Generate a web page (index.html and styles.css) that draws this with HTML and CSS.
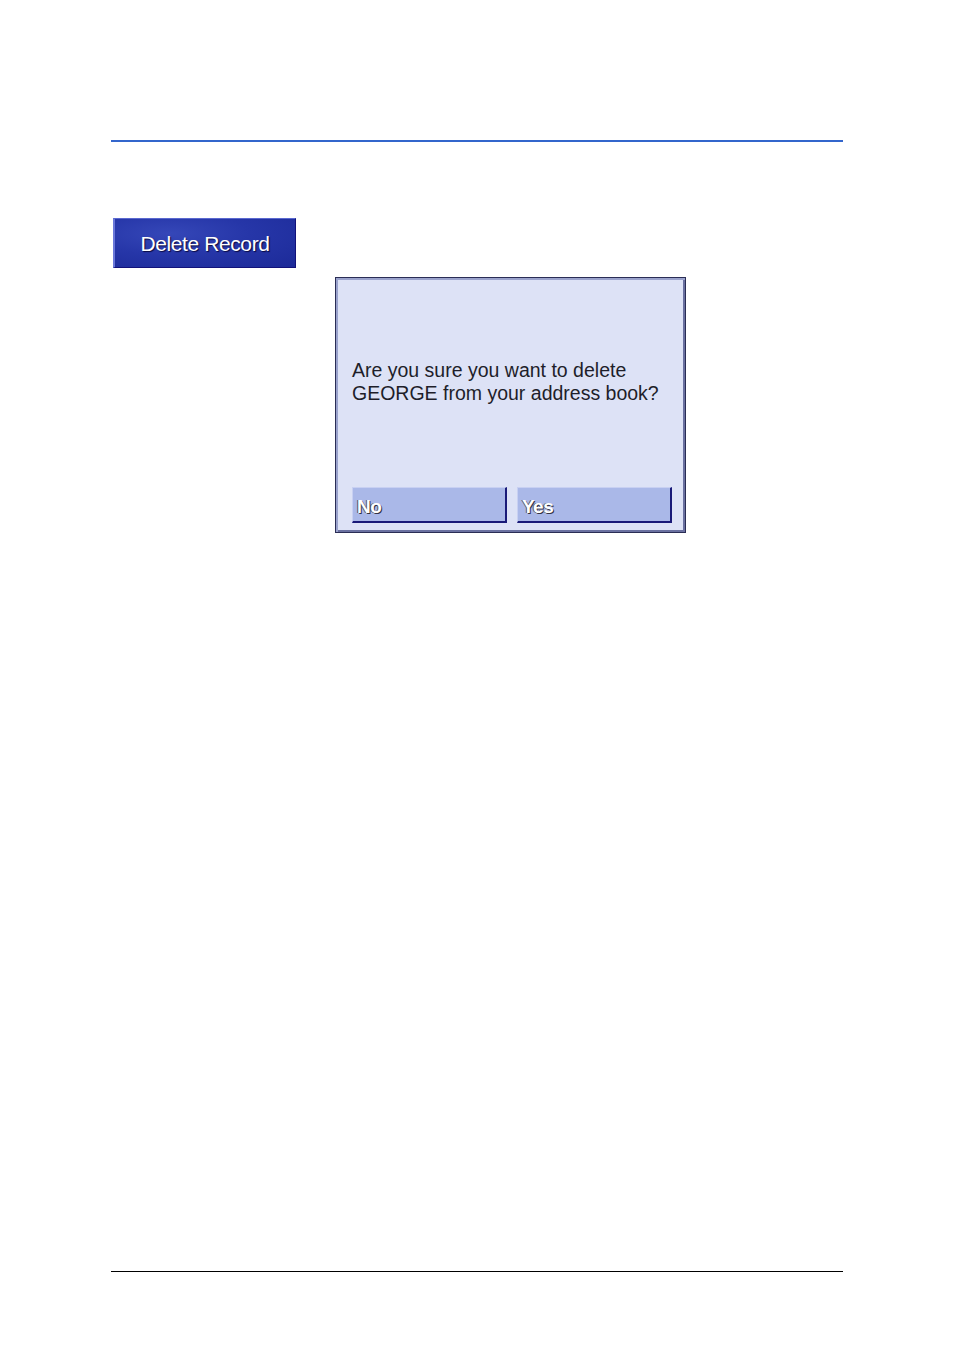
FILE: index.html
```html
<!DOCTYPE html>
<html>
<head>
<meta charset="utf-8">
<link rel="stylesheet" href="styles.css">
</head>
<body>
<div class="page">
  <div class="top-rule"></div>
  <div class="delete-btn">Delete Record</div>
  <div class="dialog">
    <p class="message">Are you sure you want to delete<br>GEORGE from your address book?</p>
    <div class="actions">
      <div class="dlg-btn">No</div>
      <div class="dlg-btn">Yes</div>
    </div>
  </div>
  <div class="spacer"></div>
  <div class="bottom-rule"></div>
</div>
</body>
</html>
```
FILE: styles.css
```css
html, body {
  margin: 0;
  padding: 0;
  background: #ffffff;
}
.page {
  width: 732px;
  margin-left: 111px;
  padding-top: 140px;
  font-family: "Liberation Sans", Arial, sans-serif;
}
.top-rule {
  height: 2px;
  background: #3366cc;
}
.delete-btn {
  margin-top: 76px;
  margin-left: 2px;
  width: 180px;
  height: 48px;
  box-sizing: content-box;
  border-top: 1px solid #5a68d0;
  border-left: 2px solid #6a78da;
  border-right: 1px solid #12127a;
  border-bottom: 1px solid #12127a;
  background: radial-gradient(ellipse at 30% 30%, #3547b8 0%, #2636a8 45%, #1c2a98 100%);
  color: #ffffff;
  font-size: 21px;
  line-height: 50px;
  text-align: center;
  text-shadow: 1px 1px 1px #0a0a40;
  letter-spacing: -0.4px;
}
.dialog {
  margin-top: 9px;
  margin-left: 224px;
  border: 1px solid #2a2d55;
  box-shadow: inset 2px 2px 0 #9aa2cc, inset -2px -2px 0 #6a70a0;
  background: #dde2f6;
  display: flex;
  flex-direction: column;
  padding: 0 13px 9px 16px;
  box-sizing: content-box;
  width: 320px;
  height: 245px;
}
.message {
  margin: 81px 0 0 0;
  font-size: 19.5px;
  line-height: 23px;
  color: #1e1e2a;
  letter-spacing: 0;
}
.actions {
  margin-top: auto;
  display: flex;
  gap: 10px;
}
.dlg-btn {
  width: 152px;
  height: 33px;
  background: #aab8e8;
  border-top: 1px solid #c8d0f2;
  border-left: 1px solid #c8d0f2;
  border-right: 2px solid #1a1a78;
  border-bottom: 2px solid #1a1a78;
  color: #ffffff;
  font-size: 19px;
  font-weight: bold;
  line-height: 38px;
  padding-left: 4px;
  box-sizing: content-box;
  text-shadow: 1px 1px 0 #333344, -1px 0 0 #555566;
  letter-spacing: -0.5px;
}
.spacer {
  height: 738px;
}
.bottom-rule {
  height: 1px;
  background: #000000;
}
```
